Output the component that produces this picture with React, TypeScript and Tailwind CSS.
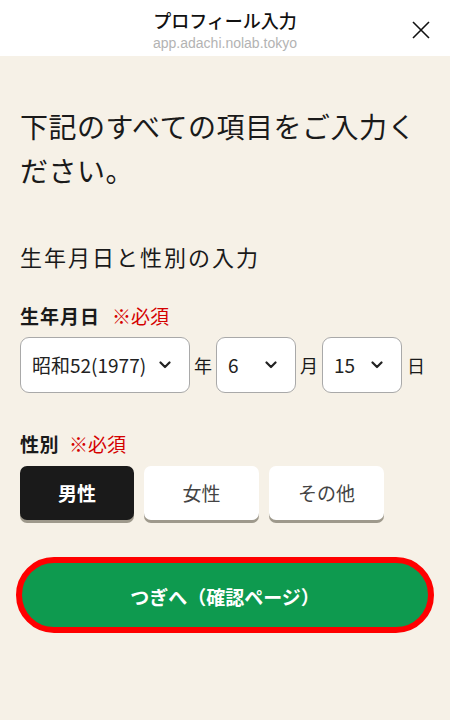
import React from "react";

const font = { fontFamily: '"Noto Sans CJK JP", "Noto Sans", sans-serif' };

function Chevron() {
  return (
    <svg width="12" height="8" viewBox="0 0 12 8" fill="none">
      <path d="M1.5 1.5 L6 6 L10.5 1.5" stroke="#222" strokeWidth="2.2" strokeLinecap="round" strokeLinejoin="round" />
    </svg>
  );
}

function Select({ value, w }: { value: string; w: string }) {
  return (
    <div className={`${w} h-[56px] shrink-0 bg-white border border-[#a9a9a9] rounded-[9px] flex items-center justify-between pl-[11px] pr-[18px]`}>
      <span className="text-[19px] text-[#222]">{value}</span>
      <Chevron />
    </div>
  );
}

export default function App() {
  return (
    <div className="w-[450px] h-[720px] bg-[#f6f1e7] text-[#1a1a1a] flex flex-col" style={font}>
      <div className="h-[56px] bg-white relative flex flex-col items-center shrink-0">
        <div className="mt-[7px] text-[18px] leading-[26px] font-medium text-[#111]">プロフィール入力</div>
        <div className="text-[14px] leading-[18px] text-[#b3b3b3] mt-[1px]" style={{ fontFamily: '"Liberation Sans", Arial, sans-serif' }}>app.adachi.nolab.tokyo</div>
        <svg className="absolute left-[412px] top-[21px]" width="18" height="18" viewBox="0 0 18 18">
          <path d="M1 1 L17 17 M17 1 L1 17" stroke="#111" strokeWidth="1.6" />
        </svg>
      </div>
      <div className="pl-[20px] pr-[16px] flex flex-col">
        <h1 className="mt-[48px] text-[28px] leading-[44px] font-normal tracking-[0.5px]">下記のすべての項目をご入力ください。</h1>
        <h2 className="mt-[48px] text-[22px] leading-[32px] font-normal tracking-[2px]">生年月日と性別の入力</h2>
        <div className="mt-[30px] text-[19px] leading-[28px] font-bold flex items-center">
          <span className="tracking-[1px]">生年月日</span>
          <span className="ml-[12px] text-[#d40000] font-normal">※必須</span>
        </div>
        <div className="mt-[7px] flex items-center">
          <Select value="昭和52(1977)" w="w-[170px]" />
          <span className="text-[18px] mx-[4px]">年</span>
          <Select value="6" w="w-[80px]" />
          <span className="text-[18px] mx-[4px]">月</span>
          <Select value="15" w="w-[80px]" />
          <span className="text-[18px] ml-[5px]">日</span>
        </div>
        <div className="mt-[37px] text-[19px] leading-[28px] font-bold flex items-center">
          <span className="tracking-[0.5px]">性別</span>
          <span className="ml-[10px] text-[#d40000] font-normal">※必須</span>
        </div>
        <div className="mt-[8px] flex gap-[10px]">
          <div className="w-[114px] h-[54px] rounded-[7px] bg-[#1a1a1a] shadow-[0_3px_0_#9e998c] flex items-center justify-center text-white text-[19px] font-bold">男性</div>
          <div className="w-[115px] h-[54px] rounded-[7px] bg-white shadow-[0_3px_0_#9e998c] flex items-center justify-center text-[#444] text-[19px]">女性</div>
          <div className="w-[115px] h-[54px] rounded-[7px] bg-white shadow-[0_3px_0_#9e998c] flex items-center justify-center text-[#444] text-[19px]">その他</div>
        </div>
        <div className="mt-[37px] ml-[-4px] w-[418px] h-[76px] rounded-full border-[6px] border-[#ff0000] bg-[#0e9a4f] flex items-center justify-center text-white text-[19px] font-bold">
          <span className="mt-[4px]">つぎへ（確認ページ）</span>
        </div>
      </div>
    </div>
  );
}
